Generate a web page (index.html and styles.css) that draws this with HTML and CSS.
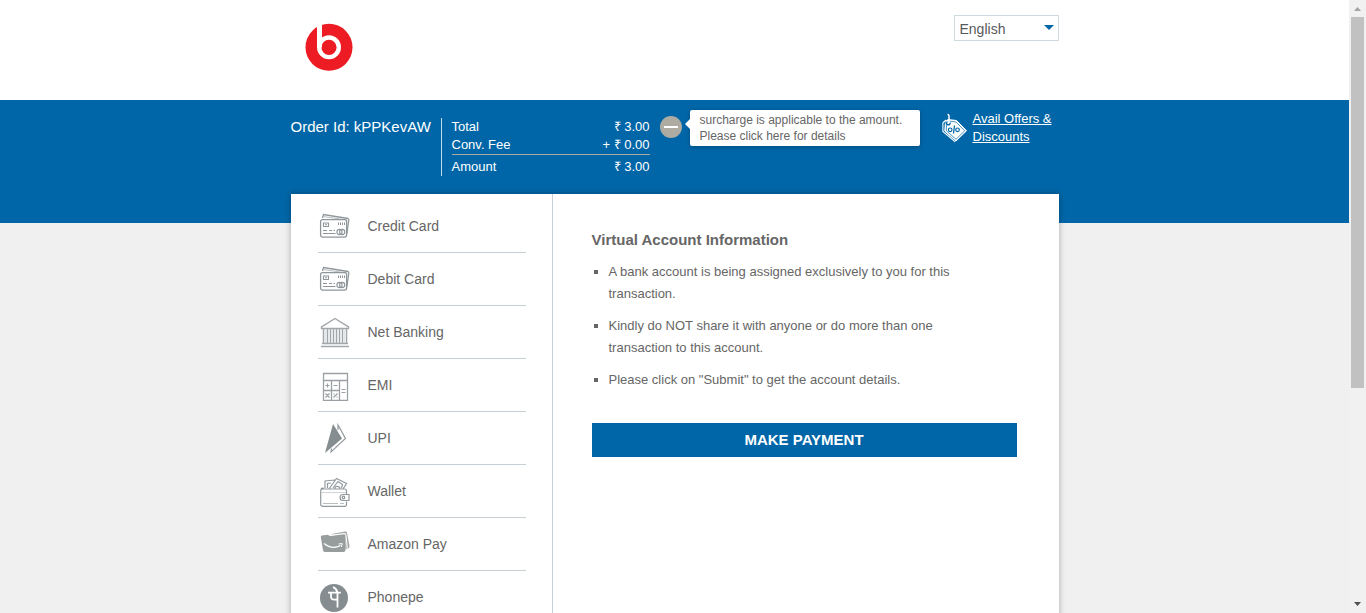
FILE: index.html
```html
<!DOCTYPE html>
<html lang="en">
<head>
<meta charset="utf-8">
<title>Payment</title>
<link rel="stylesheet" href="styles.css">
</head>
<body>
<div class="viewport">
  <div class="page">
    <header class="top">
      <div class="wrap header">
        <svg class="logo" viewBox="0 0 48 48" role="img" aria-label="Beats">
          <circle cx="24" cy="24.300" r="23.500" fill="#ed1c24"/>
          <circle cx="24" cy="24.300" r="9.800" fill="none" stroke="#fff" stroke-width="4.400"/>
          <path d="M12 2V24.300H17V0H12Z" fill="#fff"/>
        </svg>
        <div class="language">
          <select class="language-select" aria-label="Language"><option>English</option></select>
          <svg class="language-arrow" viewBox="0 0 10 5" aria-hidden="true"><path d="M0 0H10L5 5Z" fill="#0066a7"/></svg>
        </div>
      </div>
    </header>

    <section class="band">
      <div class="wrap summary">
        <div class="order-id">Order Id: kPPKevAW</div>
        <dl class="amounts">
          <div class="amount-row"><dt>Total</dt><dd>₹ 3.00</dd></div>
          <div class="amount-row"><dt>Conv. Fee</dt><dd>+ ₹ 0.00</dd></div>
          <div class="amount-row amount-final"><dt>Amount</dt><dd>₹ 3.00</dd></div>
        </dl>
        <button class="collapse" type="button" aria-label="Hide surcharge details"></button>
        <div class="surcharge">surcharge is applicable to the amount. Please click here for details</div>
        <svg class="offer-icon" viewBox="0 0 26 30" fill="none" aria-hidden="true">
          <path d="M1.200 9.500L4 7M.9 9.500V18.500L13.200 28.800" stroke="#fff" stroke-width="1.100"/>
          <path d="M3.500 8.500L6 6.500 14.500 7.500 24.500 17.800 14 28 2.800 18Z" fill="#fff" stroke="#fff" stroke-linejoin="round"/>
          <path d="M4.800 9.500L7 8 14 9 22.700 17.800 14 26.300 4.200 17.500Z" stroke="#0066a7" stroke-width=".7"/>
          <path d="M4 8.500Q4 12.500 7.500 11.500L8.500 9.500" stroke="#0066a7" stroke-width="1.400"/>
          <path d="M5.500 1.500Q7.300 1.500 7 4V10" stroke="#fff" stroke-width="1.500"/>
          <circle cx="8.200" cy="16.800" r="1.800" stroke="#0066a7" stroke-width="1.200"/>
          <path d="M11.500 20.500L12.500 12.500" stroke="#0066a7" stroke-width="1.200"/>
          <circle cx="15.500" cy="16.800" r="1.800" stroke="#0066a7" stroke-width="1.200"/>
        </svg>
        <a class="offer-link" href="#">Avail Offers &amp; Discounts</a>
      </div>
    </section>

    <main class="wrap card">
      <nav class="methods" aria-label="Payment methods">
        <a class="method" href="#">
          <svg class="method-icon" viewBox="0 0 32 32" aria-hidden="true"><use href="#cards"/></svg>
          <span>Credit Card</span></a>
        <a class="method" href="#">
          <svg class="method-icon" viewBox="0 0 32 32" aria-hidden="true"><use href="#cards"/></svg>
          <span>Debit Card</span></a>
        <a class="method" href="#">
          <svg class="method-icon" viewBox="0 0 32 32" fill="none" stroke="#a0a6aa" aria-hidden="true">
            <path d="M3.500 12.500V11L17 2.500 30.500 11V12.500Z" stroke-width="1.400"/>
            <path d="M5.500 13V27M9.500 13V27M12.500 13V27M15.500 13V27M18.500 13V27M21.500 13V27M24.500 13V27M28.500 13V27" stroke-width="1.500"/>
            <path d="M7.500 13V27M26.500 13V27" stroke="#e3e5e7"/>
            <path d="M4 27.500H30M3 30.500H31" stroke-width="1.600"/>
          </svg>
          <span>Net Banking</span></a>
        <a class="method" href="#">
          <svg class="method-icon" viewBox="0 0 32 32" fill="none" stroke="#9aa0a4" aria-hidden="true">
            <path d="M5.500 4.500H29.500V31.300H5.500ZM5.500 11.500H29.500M13.500 12V31M21.500 12V31M6 21.500H21" stroke-width="1.300"/>
            <path d="M7.500 16.500H11.500M9.500 14.500V18.500M15.500 16.500H19.500M23.500 20.500H27.500M23.500 23.500H27.500M7.500 24.500L11.500 28.500M11.500 24.500L7.500 28.500M15.500 28.500L19.500 24.500M15.500 25H16.700M18.500 28H19.700" stroke-width="1.200"/>
          </svg>
          <span>EMI</span></a>
        <a class="method" href="#">
          <svg class="method-icon" viewBox="0 0 32 32" aria-hidden="true">
            <path d="M15 2L24 16.500 7 31Z" fill="#858d91"/>
            <path d="M20 8V3L27.500 16.500 13 30 13.500 26.500" fill="none" stroke="#92999d" stroke-width="1.200"/>
          </svg>
          <span>UPI</span></a>
        <a class="method" href="#">
          <svg class="method-icon" viewBox="0 0 32 32" fill="none" stroke="#92999d" stroke-width="1.200" aria-hidden="true">
            <path d="M7 13V6L17 5M9.500 13V8.500L13 8M11 14L18.500 3.500 28.500 8.500 25 14M15 13L20 6.500 24.500 9.500 23.500 13"/>
            <path d="M17 14Q17 11 19.500 11.300Q22 11.500 22 14"/>
            <path d="M28.500 20V16Q28.500 14 26.500 14H5Q2.700 14 2.700 16V29.500Q2.700 31.300 5 31.300H26.500Q28.500 31.300 28.500 29.500V26.500M3 15Q3 12.500 6 13.500"/>
            <path d="M3 17.500H28" stroke="#d4d7d9"/>
            <path d="M5 28.500H20M22 28.500H26" stroke="#b8bdc0"/>
            <path d="M31 19.500H25Q22 19.500 22 22.500T25 25.500H31Z"/>
            <circle cx="25.500" cy="22.500" r="1.300"/>
          </svg>
          <span>Wallet</span></a>
        <a class="method" href="#">
          <svg class="method-icon" viewBox="0 0 32 32" aria-hidden="true">
            <path d="M12.500 6.200L27 3.600Q28.800 3.300 29 5L31.500 18Q31.700 20 30 20.500L27.500 21V8Z" fill="#a1a5a5"/>
            <path d="M2.800 9Q2.500 7.600 4 7.500L10 6.800Q11 8 13 7.500L25.500 6.300Q27.500 6.300 27.500 8.500V22Q27.500 24 25.500 24H7Q5.200 24 5 22.300Z" fill="#979d9d"/>
            <path d="M12 7.500L26 5.600Q27.800 5.500 28 7.500L29.300 20.500" fill="none" stroke="#fff" stroke-width="1.100"/>
            <path d="M6 15.500Q14 22 22.500 17.500" fill="none" stroke="#fff" stroke-width="1.300"/>
            <path d="M20.500 16L24.300 15.600 23.300 19" fill="none" stroke="#fff"/>
          </svg>
          <span>Amazon Pay</span></a>
        <a class="method" href="#">
          <svg class="method-icon" viewBox="0 0 32 32" fill="none" aria-hidden="true">
            <circle cx="16" cy="17" r="14" fill="#858d90"/>
            <path d="M10 11.700H22.800M13 12V15.500Q13 18.700 16.500 18.700Q18.500 18.700 19.500 18M19.500 12V26.500M15 6Q18.500 7.500 19.500 11.500" stroke="#fff" stroke-width="1.800"/>
          </svg>
          <span>Phonepe</span></a>
      </nav>
      <section class="details">
        <h1 class="title">Virtual Account Information</h1>
        <ul class="notes">
          <li>A bank account is being assigned exclusively to you for this transaction.</li>
          <li>Kindly do NOT share it with anyone or do more than one transaction to this account.</li>
          <li>Please click on "Submit" to get the account details.</li>
        </ul>
        <button class="pay" type="button">MAKE PAYMENT</button>
      </section>
    </main>
  </div>
  <div class="scrollbar" aria-hidden="true">
    <svg class="scroll-arrow" viewBox="0 0 17 17"><path d="M5 11H12L8.500 7Z" fill="#a3a3a3"/></svg>
    <div class="scroll-track"><div class="scroll-thumb"></div></div>
    <svg class="scroll-arrow" viewBox="0 0 17 17"><path d="M5 6H12L8.500 10Z" fill="#505050"/></svg>
  </div>
</div>
<svg class="symbols" aria-hidden="true">
  <symbol id="cards" viewBox="0 0 32 32">
    <g fill="none" stroke="#8f969a">
      <path d="M4.500 8L5.500 4.500 30 8.500Q31 9 30.800 10L28.800 24" stroke-width="1.300"/>
      <path d="M5 6.500L29 10" stroke="#b8bdc0"/>
      <rect x="2.600" y="9.600" width="26" height="17.500" rx="2" fill="#fff" stroke-width="1.300"/>
      <path d="M5.500 13H10.500V16.500H5.500ZM7 14.700H9" stroke-width="1.100"/>
      <path d="M20.500 12.500V15M22.500 12.500V15M24.500 12.500V15M26.500 12.500V15"/>
      <path d="M5 20.500H9M11 20.500H14M15.500 20.500H17M5 23.500H17.500" stroke-width="1.100"/>
      <circle cx="21.500" cy="22" r="2.600" stroke-width="1.100"/><circle cx="24.200" cy="22" r="2.600" stroke-width="1.100"/>
    </g>
  </symbol>
</svg>
</body>
</html>
```

FILE: styles.css
```css
* { box-sizing: border-box; }

body {
  margin: 0;
  font-family: "Liberation Sans", Arial, sans-serif;
  font-size: 13px;
  color: #666;
  background: #f0f0f0;
}

.symbols { display: none; }

.viewport { display: flex; height: 100vh; overflow: hidden; }
.page { flex: 1; min-width: 0; }

.wrap {
  width: 100%;
  max-width: 768px;
  margin: 0 auto;
}

.top { height: 100px; background: #fff; }
.header {
  display: flex;
  justify-content: space-between;
  align-items: flex-start;
  padding: 15px 0 0 14px;
}
.logo { width: 48px; height: 48px; margin-top: 8px; }

.language { position: relative; }
.language-select {
  appearance: none;
  display: block;
  width: 105px;
  height: 26px;
  padding: 2px 20px 0 5px;
  border: 1px solid #cfdadf;
  border-radius: 0;
  background: #fff;
  color: #58595b;
  font: inherit;
  font-size: 14px;
}
.language-arrow {
  position: absolute;
  top: 10px;
  right: 5px;
  width: 10px;
  height: 5px;
  pointer-events: none;
}

.band { height: 123px; background: #0066a7; color: #fff; }
.summary { display: flex; align-items: flex-start; padding-top: 10px; }

.order-id {
  width: 150px;
  padding-top: 8px;
  font-size: 15px;
  line-height: 18px;
}

.amounts {
  width: 209px;
  height: 58px;
  margin: 8px 0 0;
  padding-left: 10px;
  border-left: 1px solid #c5dcea;
  line-height: 18px;
}
.amount-row { display: flex; justify-content: space-between; }
.amount-row dd { margin: 0; }
.amount-final { border-top: 1px solid #a9a9a0; padding-top: 3px; }

.collapse {
  display: flex;
  align-items: center;
  justify-content: center;
  width: 22px;
  height: 22px;
  margin: 6px 8px 0 10px;
  padding: 0;
  border: 0;
  border-radius: 50%;
  background: #aeaca2;
}
.collapse::before { content: ""; width: 14px; height: 2px; background: #fff; }

.surcharge {
  position: relative;
  width: 230px;
  padding: 2px 10px;
  border-radius: 2px;
  background: #fff;
  color: #666;
  font-size: 12px;
  line-height: 16px;
  box-shadow: 0 1px 4px rgba(0, 0, 0, .25);
}
.surcharge::before {
  content: "";
  position: absolute;
  left: -5px;
  top: 9px;
  border: solid transparent;
  border-width: 5px 5px 5px 0;
  border-right-color: #fff;
}

.offer-icon { width: 26px; height: 30px; margin: 3px 5px 0 22px; }
.offer-link {
  flex: 1;
  color: #fff;
  font-size: 13px;
  line-height: 18px;
}

.card {
  position: relative;
  display: flex;
  min-height: 600px;
  margin-top: -29px;
  background: #fff;
  box-shadow: 0 0 6px rgba(0, 0, 0, .3);
}

.methods {
  width: 262px;
  padding: 6px 26px 0 27px;
  border-right: 1px solid #c6cfd3;
}
.method {
  display: flex;
  align-items: center;
  gap: 18px;
  height: 53px;
  border-bottom: 1px solid #c6cfd3;
  color: #666;
  font-size: 14px;
  text-decoration: none;
}
.method-icon { width: 32px; height: 32px; }

.details { flex: 1; padding: 36px 42px 0 39px; }
.title {
  margin: 0 0 11px;
  font-size: 15px;
  line-height: 20px;
}
.notes {
  margin: 0;
  padding: 0 40px 0 17px;
  list-style: square;
  line-height: 22px;
}
.notes li { margin-bottom: 10px; }
.pay {
  width: 100%;
  height: 34px;
  margin-top: 22px;
  padding: 0 0 2px;
  border: 0;
  background: #0066a7;
  color: #fff;
  font: inherit;
  font-size: 15px;
  font-weight: bold;
}

.scrollbar {
  display: flex;
  flex-direction: column;
  width: 17px;
  background: #f1f1f1;
}
.scroll-arrow { width: 17px; height: 17px; }
.scroll-track { flex: 1; padding: 0 2px; }
.scroll-thumb { height: 64%; background: #c1c1c1; }
```
